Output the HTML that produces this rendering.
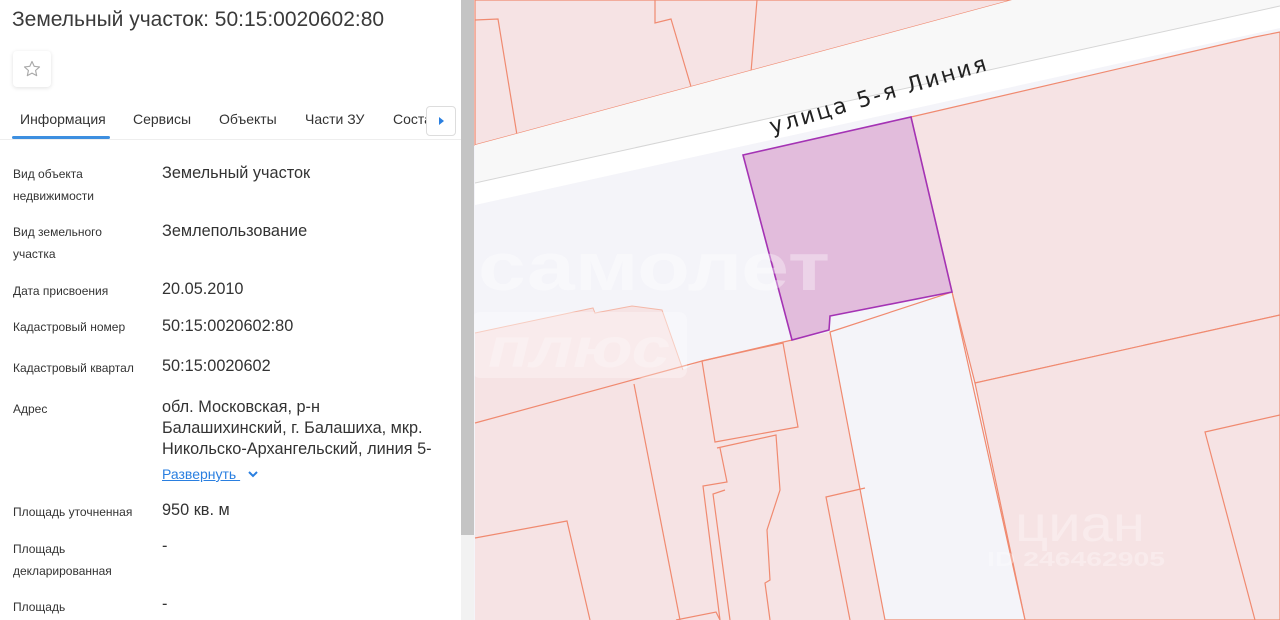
<!DOCTYPE html>
<html><head><meta charset="utf-8"><style>
*{margin:0;padding:0;box-sizing:border-box}
body{width:1280px;height:620px;overflow:hidden;background:#fff;font-family:"Liberation Sans","Noto Sans CJK SC",sans-serif;color:#333;position:relative}
#map{position:absolute;left:0;top:0}
#panel{position:absolute;left:0;top:0;width:461px;height:620px;background:#fff}
h1{position:absolute;left:12px;top:8px;font-size:21px;font-weight:normal;color:#3a3a3a;white-space:nowrap}
.star{position:absolute;left:13px;top:51px;width:38px;height:36px;border-radius:4px;box-shadow:0 1px 4px rgba(0,0,0,.12);display:flex;align-items:center;justify-content:center}
.tabs{position:absolute;left:0;top:110px;width:461px;height:30px;border-bottom:1px solid #eee;font-size:14px;color:#333}
.tabs span{position:absolute;top:1px}
.ul{position:absolute;left:12px;top:26px;width:98px;height:3px;background:#3d8fe0;border-radius:2px}
.arr{position:absolute;left:426px;top:106px;width:30px;height:30px;background:#fff;border:1px solid #ddd;border-radius:4px;display:flex;align-items:center;justify-content:center}
.l{position:absolute;left:13px;font-size:12px;line-height:22px;color:#333}
.v{position:absolute;left:162px;font-size:16.3px;line-height:21px;color:#333;white-space:nowrap}
#sb{position:absolute;left:461px;top:0;width:13px;height:535px;background:#c4c4c4}
#sb2{position:absolute;left:461px;top:535px;width:13px;height:85px;background:#f2f2f2}
</style></head><body>
<svg id="map" width="1280" height="620" viewBox="0 0 1280 620">
<rect x="0" y="0" width="1280" height="620" fill="#f4f4f9"/>
<polygon points="475,0 1012,0 475,145" fill="#f6e3e4" stroke="#f08a70" stroke-width="1.2"/>
<polyline points="475,20 498,19 517,135" fill="none" stroke="#f08a70" stroke-width="1.2"/>
<polyline points="655,0 655,23 671,19 692,90" fill="none" stroke="#f08a70" stroke-width="1.2"/>
<line x1="757" y1="0" x2="751" y2="72" stroke="#f08a70" stroke-width="1.2"/>
<polygon points="475,145 1012,0 1280,0 1280,28 475,205" fill="#f8f8f8"/>
<polygon points="475,183 1280,6 1280,28 475,205" fill="#ffffff"/>
<line x1="475" y1="183" x2="1280" y2="6" stroke="#d6d6d6" stroke-width="1"/>
<polygon points="911,117 1255,37 1280,32 1280,315 975,383 952,292" fill="#f6e3e4" stroke="#f08a70" stroke-width="1.2"/>
<polygon points="975,383 1280,315 1280,620 1025,620" fill="#f6e3e4" stroke="#f08a70" stroke-width="1.2"/>
<polyline points="1280,415 1205,432 1255,620" fill="none" stroke="#f08a70" stroke-width="1.2"/>
<polygon points="475,333 593,308 595,313 632,306 662,310 683,370 702,360 792,340 830,332 885,620 475,620" fill="#f6e3e4"/>
<polyline points="475,333 593,308 595,313 632,306 662,310 683,370" fill="none" stroke="#f4b8a8" stroke-width="1"/>
<polygon points="830,332 952,292 1025,620 885,620" fill="#f4f4f9" stroke="#f08a70" stroke-width="1.2"/>
<polyline points="475,423 702,361 792,340" fill="none" stroke="#f08a70" stroke-width="1.2"/>
<polyline points="634,384 680,620" fill="none" stroke="#f08a70" stroke-width="1.2"/>
<polygon points="702,361 783,343 798,427 715,442" fill="none" stroke="#f08a70" stroke-width="1.2"/>
<polyline points="717,448 776,435 780,490 767,530 770,580 765,583 770,620" fill="none" stroke="#f08a70" stroke-width="1.2"/>
<polyline points="720,448 727,482 703,486 720,620" fill="none" stroke="#f08a70" stroke-width="1.2"/>
<polyline points="725,490 713,494 730,620" fill="none" stroke="#f08a70" stroke-width="1.2"/>
<polyline points="475,538 567,521 590,620" fill="none" stroke="#f08a70" stroke-width="1.2"/>
<polyline points="676,620 716,612 720,620" fill="none" stroke="#f08a70" stroke-width="1.2"/>
<polyline points="865,488 826,497 850,620" fill="none" stroke="#f08a70" stroke-width="1.2"/>
<polygon points="743,155 911,117 952,292 830,316 829,330 792,340" fill="#e2bcdc" stroke="#a433b4" stroke-width="1.6"/>
<text x="0" y="0" transform="translate(772,134) rotate(-16.5)" font-family="DejaVu Sans, sans-serif" font-size="22" fill="#222" textLength="225" lengthAdjust="spacing">улица 5-я Линия</text>
<text x="478" y="290" font-family="Liberation Sans, sans-serif" font-weight="bold" font-size="68" fill="#ffffff" fill-opacity="0.35" textLength="352" lengthAdjust="spacingAndGlyphs">самолет</text>
<rect x="472" y="312" width="215" height="66" rx="8" fill="#ffffff" fill-opacity="0.3"/>
<text x="488" y="367" font-family="Liberation Sans, sans-serif" font-weight="bold" font-style="italic" font-size="56" fill="#ffffff" fill-opacity="0.25" textLength="182" lengthAdjust="spacingAndGlyphs">плюс</text>
<text x="1015" y="541" font-family="Liberation Sans, sans-serif" font-size="50" fill="#ffffff" fill-opacity="0.3" textLength="130" lengthAdjust="spacingAndGlyphs">циан</text>
<text x="987" y="566" font-family="Liberation Sans, sans-serif" font-weight="bold" font-size="20" fill="#ffffff" fill-opacity="0.3" textLength="178" lengthAdjust="spacingAndGlyphs">ID 246462905</text>
</svg>
<div id="panel">
<h1>Земельный участок: 50:15:0020602:80</h1>
<div class="star"><svg width="20" height="20" viewBox="0 0 24 24"><path d="M12 3l2.7 5.8 6.3.7-4.7 4.3 1.3 6.2L12 16.9 6.4 20l1.3-6.2L3 9.5l6.3-.7z" fill="none" stroke="#aaa" stroke-width="1.4" stroke-linejoin="round"/></svg></div>
<div class="tabs"><span style="left:20px">Информация</span><span style="left:133px">Сервисы</span><span style="left:219px">Объекты</span><span style="left:305px">Части ЗУ</span><span style="left:393px">Соста</span><div class="ul"></div></div>
<div class="arr"><svg width="8" height="10"><path d="M2 1l5 4-5 4z" fill="#2a7fe0"/></svg></div>
<div class="l" style="top:163px">Вид объекта<br>недвижимости</div><div class="v" style="top:163px">Земельный участок</div>
<div class="l" style="top:221px">Вид земельного<br>участка</div><div class="v" style="top:221px">Землепользование</div>
<div class="l" style="top:280px">Дата присвоения</div><div class="v" style="top:279px">20.05.2010</div>
<div class="l" style="top:316px">Кадастровый номер</div><div class="v" style="top:316px">50:15:0020602:80</div>
<div class="l" style="top:357px">Кадастровый квартал</div><div class="v" style="top:356px">50:15:0020602</div>
<div class="l" style="top:398px">Адрес</div><div class="v" style="top:397px">обл. Московская, р-н<br>Балашихинский, г. Балашиха, мкр.<br>Никольско-Архангельский, линия 5-</div>
<div class="v" style="top:464px;font-size:14px;color:#2a7fe0;text-decoration:underline">Развернуть <svg width="14" height="10" style="margin-left:6px" viewBox="0 0 14 10"><path d="M3 3l4 4 4-4" fill="none" stroke="#2a7fe0" stroke-width="2"/></svg></div>
<div class="l" style="top:501px">Площадь уточненная</div><div class="v" style="top:500px">950 кв. м</div>
<div class="l" style="top:538px">Площадь<br>декларированная</div><div class="v" style="top:536px">-</div>
<div class="l" style="top:596px">Площадь</div><div class="v" style="top:594px">-</div>
</div>
<div id="sb"></div><div id="sb2"></div>
</body></html>
